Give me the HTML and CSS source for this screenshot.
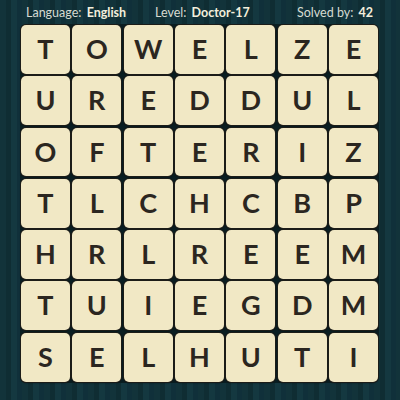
FILE: index.html
```
<!DOCTYPE html>
<html>
<head>
<meta charset="utf-8">
<link rel="stylesheet" href="styles.css">
</head>
<body>
<div class="page">
  <div class="header">
    <div class="info">Language: <b>English</b></div>
    <div class="info">Level: <b>Doctor-17</b></div>
    <div class="info">Solved by: <b>42</b></div>
  </div>
  <div class="board">
    <div class="tile">T</div><div class="tile">O</div><div class="tile">W</div><div class="tile">E</div><div class="tile">L</div><div class="tile">Z</div><div class="tile">E</div>
    <div class="tile">U</div><div class="tile">R</div><div class="tile">E</div><div class="tile">D</div><div class="tile">D</div><div class="tile">U</div><div class="tile">L</div>
    <div class="tile">O</div><div class="tile">F</div><div class="tile">T</div><div class="tile">E</div><div class="tile">R</div><div class="tile">I</div><div class="tile">Z</div>
    <div class="tile">T</div><div class="tile">L</div><div class="tile">C</div><div class="tile">H</div><div class="tile">C</div><div class="tile">B</div><div class="tile">P</div>
    <div class="tile">H</div><div class="tile">R</div><div class="tile">L</div><div class="tile">R</div><div class="tile">E</div><div class="tile">E</div><div class="tile">M</div>
    <div class="tile">T</div><div class="tile">U</div><div class="tile">I</div><div class="tile">E</div><div class="tile">G</div><div class="tile">D</div><div class="tile">M</div>
    <div class="tile">S</div><div class="tile">E</div><div class="tile">L</div><div class="tile">H</div><div class="tile">U</div><div class="tile">T</div><div class="tile">I</div>
  </div>
</div>
</body>
</html>
```
FILE: styles.css
```
html, body {
  margin: 0;
  padding: 0;
}
body {
  width: 400px;
  height: 400px;
  overflow: hidden;
  background-color: #12333a;
  background-image: repeating-linear-gradient(90deg,
    #12333a 0px, #12333a 6px,
    #0f2d33 6px, #0f2d33 11px,
    #143840 11px, #143840 17px,
    #10303a 17px, #10303a 22px);
  font-family: Lato, "Open Sans", sans-serif;
}
.page {
  display: flex;
  flex-direction: column;
}
.header {
  height: 24px;
  display: grid;
  grid-template-columns: 129px 1fr auto;
  align-items: center;
  padding: 0 27px 0 26px;
  color: #d6dbd2;
  font-size: 12.5px;
}
.info b {
  color: #f3efdc;
  font-weight: 700;
  margin-left: 2px;
}
.board {
  margin: 0 0 0 20px;
  width: 357px;
  padding: 1px;
  background: #0a1e22;
  border-radius: 7px;
  display: grid;
  grid-template-columns: repeat(7, 1fr);
  grid-auto-rows: 48.9px;
  gap: 2.4px;
}
.tile {
  background: #f1e8c5;
  border-radius: 5px;
  box-shadow: 0 0 0 1px #1c1c18, 0 1px 2px rgba(0,0,0,0.5);
  display: flex;
  align-items: center;
  justify-content: center;
  color: #2b2620;
  font-size: 27px;
  font-weight: 700;
  padding-bottom: 2px;
  box-sizing: border-box;
}
```
